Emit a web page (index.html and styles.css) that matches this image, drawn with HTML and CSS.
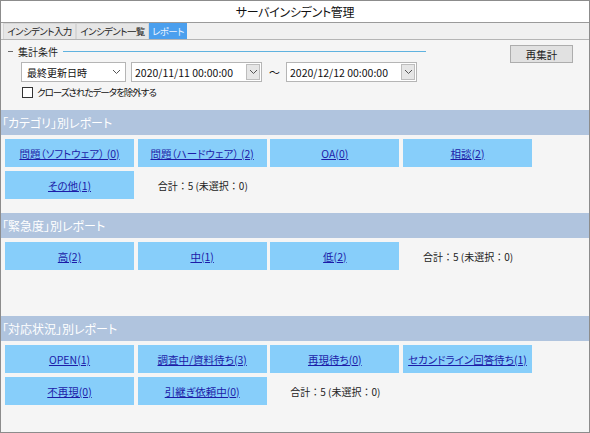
FILE: index.html
```html
<!DOCTYPE html>
<html lang="ja">
<head>
<meta charset="utf-8">
<title>サーバインシデント管理</title>
<link rel="stylesheet" href="styles.css">
</head>
<body>
<div class="window">
  <div class="titlebar">サーバインシデント管理</div>
  <div class="tabs">
    <div class="tab">インシデント入力</div>
    <div class="tab">インシデント一覧</div>
    <div class="tab active">レポート</div>
  </div>
  <div class="content">
    <div class="filter">
      <div class="filter-head">
        <div class="legend">
          <span class="dash"></span>
          <span class="legend-text">集計条件</span>
          <span class="legend-line"></span>
        </div>
        <button class="recalc">再集計</button>
      </div>
      <div class="controls">
        <div class="select">
          <span>最終更新日時</span>
          <svg class="chev" width="9" height="6" viewBox="0 0 9 6"><path d="M1 1 L4.5 4.5 L8 1" fill="none" stroke="#555" stroke-width="1"/></svg>
        </div>
        <div class="picker">
          <span>2020/11/11 00:00:00</span>
          <span class="dd"><svg width="9" height="6" viewBox="0 0 9 6"><path d="M1 1 L4.5 4.5 L8 1" fill="none" stroke="#555" stroke-width="1"/></svg></span>
        </div>
        <span class="tilde">～</span>
        <div class="picker">
          <span>2020/12/12 00:00:00</span>
          <span class="dd"><svg width="9" height="6" viewBox="0 0 9 6"><path d="M1 1 L4.5 4.5 L8 1" fill="none" stroke="#555" stroke-width="1"/></svg></span>
        </div>
      </div>
      <label class="check"><span class="box"></span>クローズされたデータを除外する</label>
    </div>

    <section class="report">
      <div class="report-head">「カテゴリ」別レポート</div>
      <div class="items">
        <div class="item"><a href="#">問題（ソフトウェア） (0)</a></div>
        <div class="item"><a href="#">問題（ハードウェア） (2)</a></div>
        <div class="item"><a href="#">OA(0)</a></div>
        <div class="item"><a href="#">相談(2)</a></div>
        <div class="item"><a href="#">その他(1)</a></div>
        <div class="total">合計：5 (未選択：0)</div>
      </div>
    </section>

    <section class="report">
      <div class="report-head">「緊急度」別レポート</div>
      <div class="items">
        <div class="item"><a href="#">高(2)</a></div>
        <div class="item"><a href="#">中(1)</a></div>
        <div class="item"><a href="#">低(2)</a></div>
        <div class="total">合計：5 (未選択：0)</div>
      </div>
    </section>

    <section class="report last">
      <div class="report-head">「対応状況」別レポート</div>
      <div class="items">
        <div class="item"><a href="#">OPEN(1)</a></div>
        <div class="item"><a href="#">調査中/資料待ち(3)</a></div>
        <div class="item"><a href="#">再現待ち(0)</a></div>
        <div class="item"><a href="#">セカンドライン回答待ち(1)</a></div>
        <div class="item"><a href="#">不再現(0)</a></div>
        <div class="item"><a href="#">引継ぎ依頼中(0)</a></div>
        <div class="total">合計：5 (未選択：0)</div>
      </div>
    </section>
  </div>
</div>
</body>
</html>
```

FILE: styles.css
```css
* { box-sizing: border-box; }
html, body { margin: 0; padding: 0; background: #ffffff; }
body {
  font-family: "Noto Sans CJK JP", "Noto Sans", sans-serif;
  font-feature-settings: "palt";
  font-size: 10px;
  color: #111;
}
.window {
  width: 590px;
  height: 433px;
  border: 1px solid #8c8c8c;
  display: flex;
  flex-direction: column;
  background: #f5f5f5;
  overflow: hidden;
}
.titlebar {
  height: 22px;
  flex: 0 0 22px;
  background: #ffffff;
  border-bottom: 1px solid #9a9a9a;
  text-align: center;
  font-size: 12px;
  letter-spacing: -0.3px;
  line-height: 21px;
  color: #111;
}
.tabs {
  flex: 0 0 17px;
  height: 17px;
  display: flex;
  padding-left: 2px;
  background: #f0f0f0;
  border-bottom: 1px solid #b4b4b4;
}
.tab {
  width: 73px;
  height: 16px;
  background: #e6e6e6;
  border: 1px solid #d6d6d6;
  border-bottom: none;
  font-size: 9.5px;
  letter-spacing: -0.6px;
  line-height: 15px;
  text-align: center;
  white-space: nowrap;
  color: #222;
}
.tab.active {
  width: 38px;
  background: #4a9fee;
  border-color: #4a9fee;
  color: #e9f3ff;
}
.content {
  flex: 1;
  display: flex;
  flex-direction: column;
  background: #f5f5f5;
}
.filter {
  flex: 0 0 70px;
  height: 70px;
  padding: 5px 16px 0 7px;
}
.filter-head {
  display: flex;
  align-items: flex-start;
  height: 17px;
}
.legend {
  display: flex;
  align-items: center;
  width: 418px;
  height: 13px;
}
.dash { width: 5px; height: 1px; background: #6a6a6a; }
.legend-text { margin: 0 5px 0 5px; font-size: 10px; color: #222; line-height: 13px; }
.legend-line { flex: 1; height: 1px; background: #5fb2df; }
.recalc {
  margin-left: auto;
  width: 63px;
  height: 18px;
  padding: 0;
  background: #e1e1e1;
  border: 1px solid #adadad;
  font-family: inherit;
  font-size: 10.5px;
  line-height: 15px;
  color: #222;
}
.controls {
  display: flex;
  align-items: center;
  padding-left: 13px;
  height: 20px;
}
.select {
  width: 105px;
  height: 20px;
  background: #fff;
  border: 1px solid #b5b5b5;
  display: flex;
  align-items: center;
  justify-content: space-between;
  padding: 0 4px 0 5px;
  font-size: 10px;
}
.picker {
  margin-left: 5px;
  width: 131px;
  height: 20px;
  background: #fff;
  border: 1px solid #b5b5b5;
  display: flex;
  align-items: center;
  justify-content: space-between;
  padding: 0 1px 0 3px;
  font-size: 10.5px;
  white-space: nowrap;
}
.dd {
  width: 14px;
  height: 16px;
  background: #e6e6e6;
  border: 1px solid #bdbdbd;
  display: flex;
  align-items: center;
  justify-content: center;
}
.tilde {
  width: 23px;
  margin-left: 1px;
  text-align: center;
  font-size: 11px;
}
.tilde + .picker { margin-left: 0; }
.check {
  display: flex;
  align-items: center;
  margin-top: 4px;
  padding-left: 14px;
  font-size: 9.5px;
  letter-spacing: -1px;
  height: 12px;
  white-space: nowrap;
}
.box {
  width: 11px;
  height: 11px;
  border: 1px solid #333;
  background: #fff;
  margin-right: 4px;
}
.report {
  flex: 0 0 103px;
  height: 103px;
}
.report.last { flex: 1; }
.report-head {
  height: 25px;
  background: #b0c4de;
  color: #ffffff;
  font-size: 12px;
  line-height: 25px;
  padding-left: 1px;
  white-space: nowrap;
}
.items {
  display: flex;
  flex-wrap: wrap;
  align-items: center;
  gap: 4px 3.67px;
  padding: 4px 0 0 4px;
}
.item {
  width: 129px;
  height: 28px;
  background: #87cefa;
  display: flex;
  align-items: center;
  justify-content: center;
}
.item a {
  color: #1c1ca8;
  text-decoration: underline;
  font-size: 10.5px;
  white-space: nowrap;
}
.total {
  margin-left: 20px;
  font-size: 10px;
  font-feature-settings: normal;
  color: #222;
  white-space: nowrap;
}
```
